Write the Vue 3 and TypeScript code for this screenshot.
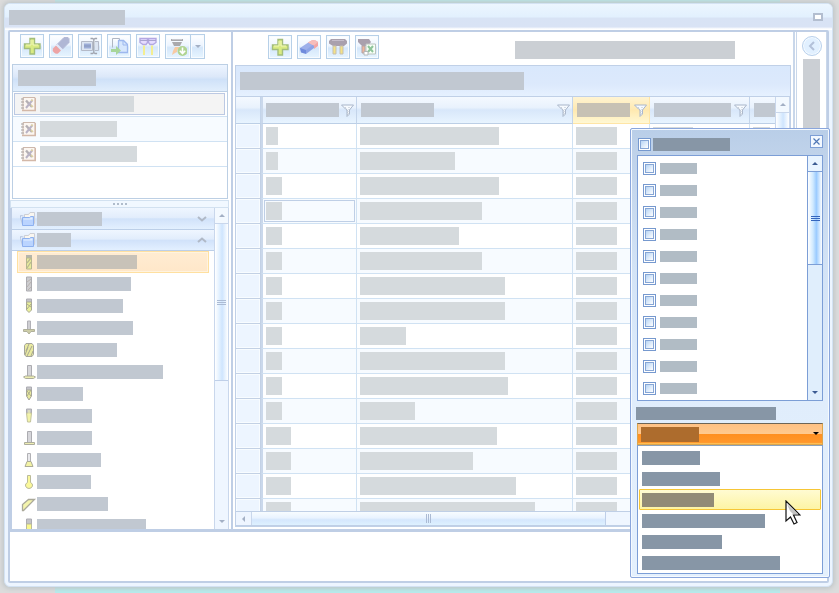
<script setup lang="ts">
import { ref } from 'vue'

interface Tool { name: string; art: string }

const cross = '<path d="M7 1.500h4.500V7H17v4.500h-5.500V17H7v-5.500H1.500V7H7z" fill="#d9eb83" stroke="#a3bd7b" stroke-width="1.4"/><path d="M8 3v5H3M10 3v5h5" fill="none" stroke="#f1f8b8"/>'

const leftTools: Tool[] = [
  { name: 'Add', art: cross },
  { name: 'Clear', art: '<path d="M12 .5h4l1 1v4l-7 7-5-5z" fill="#b0b7d5" stroke="#b4bad6"/><path d="M4 8.500l5 5-3 3q-2 1-4-1-2-2-1-4z" fill="#eda4a5"/><path d="M5 7.500l5.500 5.500" stroke="#e4eafb" stroke-width="1.5"/>' },
  { name: 'Rename', art: '<path d="M.5 4.500h11v9H.5zM14 4.500h3.500v9H14" fill="#dce5f2" stroke="#b4bac8"/><path d="M3 6.500h7v5H3z" fill="#9cacd7"/><path d="M3 9h7" stroke="#8797ba"/><path d="M9.500 1.500h2l1.300 1 1.300-1h2M12.800 2v14M9.500 16.500h2l1.300-1 1.300 1h2" fill="none" stroke="#a0a4ae" stroke-width="1.3"/>' },
  { name: 'Copy to', art: '<path d="M2.500 1.500h7v4M2.500 1.500v9" fill="#fff" stroke="#afb6c3"/><path d="M8.500 3.500h5l4 4v8h-9z" fill="#d7e7fd" stroke="#9db8ee" stroke-width="1.3"/><path d="M13 4v4h4" fill="none" stroke="#9db8ee"/><path d="M1 12h5V9l5 4.500L6 18v-3H1z" fill="#a8d69b"/>' },
  { name: 'Tools', art: '<path d="M1 1.500h7.500v4L7 7.500H4L1 5.500zM9.500 1.500H17v4l-3 2h-3l-1.500-2z" fill="#e5dcff" stroke="#b3a7e2" stroke-width="1.4"/><path d="M1 3.500h16" stroke="#a9a3d0"/><path d="M5 8.500V18M13 8.500V18" stroke="#f4ee91" stroke-width="2"/>' }
]

const addToolArt = '<path d="M2 1h12v2H2zM3 4h10l-2 4H5z" fill="#a9a9ad"/><path d="M3 1.500h10" stroke="#c7c7cc"/><path d="M6 9h5l-3 3v2l-2 1-3 2 1-4z" fill="#f8c9a2"/><circle cx="13.500" cy="13" r="5" fill="#b0d492"/><path d="M13.500 9.500v6M10.800 12.800l2.700 2.700 2.700-2.700" fill="none" stroke="#fff" stroke-width="1.6"/>'

const gridTools: Tool[] = [
  { name: 'Add row', art: cross },
  { name: 'Delete row', art: '<path d="M0 10l9-6 5 4-8 7-5-2z" fill="#9dafea"/><path d="M0 10l6 2v4l-5-1.500z" fill="#6f8bdc"/><path d="M6 12l8-6v4l-8 6z" fill="#8da4e6"/><path d="M8 4.500L12.500 2q3.500 0 5.500 2v4l-4 3V7.500z" fill="#f2a5a5"/><path d="M8 4.500L12.500 2q3.500 0 5.500 2l-4 3.500z" fill="#f6bdbb"/>' },
  { name: 'Mount tool', art: '<path d="M2 1h14l2 2v2.500L15 8H4L0 5.500V3z" fill="#a9a0ad"/><path d="M3 2.500h12" stroke="#c5bdca"/><path d="M4 8h3v8H4zM11 8h3v8h-3z" fill="#f5e284" stroke="#c5bfb0"/>' },
  { name: 'Export to sheet', art: '<path d="M0 1h11l2 3-3 4H4L0 4z" fill="#a9a0ad"/><path d="M4 8h3v7H4z" fill="#f0b69b" stroke="#b3a2a5"/><path d="M8 6h9.500v10H8z" fill="#f8fff7" stroke="#bbc3bf"/><path d="M10 8l5 6M15 8l-5 6" stroke="#8fc59a" stroke-width="2"/><path d="M6 13.500h4V17H6z" fill="#fff" stroke="#b3b8b8"/>' }
]

const folderArt = '<path d="M.5 4.500l3 .5M.5 4.500v2l2 7" fill="none" stroke="#b9c6df"/><path d="M4.500 5V3.500h4l1.500-2h4.500v11h-10z" fill="#f9f6f0" stroke="#cdcfd6"/><path d="M2.500 6.500h7l1-1h3v9h-11z" fill="#bad4ff" stroke="#8eb1ef"/><path d="M3.500 7.500h6.500l1-1h1.500v2h-9z" fill="#e3efff"/>'
const bookArt = '<path d="M3 1.500h12v13H3z" fill="#fcf6f1" stroke="#cdb8ac"/><path d="M2 14.500h13.500V2" fill="none" stroke="#d3b8a8" stroke-width="1.5"/><path d="M1 3h3M1 6h3M1 9h3M1 12h3" stroke="#aaa29f"/><path d="M6 4.500l6 6.500" stroke="#b4b0b4" stroke-width="2.4"/><path d="M12.500 4l-6.500 8" stroke="#b9b3c5" stroke-width="2"/><path d="M11 9l2 2M11.500 5l1-1.500" stroke="#ddd3a0" stroke-width="1.5"/>'

const projects = [94, 77, 97]

const shank = '<path d="M5.500 1h5v5h-5z" fill="#c5c5c8" stroke="#acacb3"/>'
const cutters = [
  { w: 100, art: '<path d="M5 1h6v3H5z" fill="#b5b5ac"/><path d="M5.500 4h5v11h-5z" fill="#e8eb9b" stroke="#b6b68f"/><path d="M6 9l4-5M6 14l4-6" stroke="#bbb993" stroke-width="1.3"/>' },
  { w: 94, art: '<path d="M5.500 1h5v14h-5z" fill="#cdcdd0" stroke="#acacb1"/><path d="M6 6l4-3M6 11l4-5M7 14l3-3" stroke="#b9b3b0"/>' },
  { w: 86, art: shank + '<path d="M5.500 4h5v8L8 14.500 5.500 12z" fill="#eaf09b" stroke="#a9a995"/><path d="M6 6l4 3M10 6l-4 5" stroke="#adad8c"/>' },
  { w: 96, art: '<path d="M6.500 1h3v9h-3z" fill="#cfcfd3" stroke="#b1b1b7"/><path d="M2.500 9.500h11v2H10L8 14l-2-2.500H2.500z" fill="#cdcda6" stroke="#b0b09b"/>' },
  { w: 80, art: '<path d="M5 1.500h6l1.500 2v9l-1.500 2H5l-1.500-2v-9z" fill="#e9eaa0" stroke="#a5a59b"/><path d="M5 9l3-7M6 14l5-10M10 14l2-5M4 13l3-8" stroke="#a7a792"/>' },
  { w: 126, art: '<path d="M6.500 1.500h4v11h-4z" fill="#d6d6da" stroke="#acacb1"/><path d="M2.500 13l2-1h8l2 1-2 1.500h-8z" fill="#ecedb0" stroke="#adad9c"/>' },
  { w: 46, art: shank + '<path d="M5.500 4h5v6L8 14 5.500 10z" fill="#e9ea9d" stroke="#a5a59b"/><path d="M6 10l4-6M6 5l4 5" stroke="#acad8c"/>' },
  { w: 55, art: shank + '<path d="M5.500 5h5L9.500 14h-3z" fill="#f2f3a8" stroke="#c3c39c"/><path d="M8 2v5" stroke="#f5f5b4"/>' },
  { w: 55, art: '<path d="M6.500 1.500h4v11h-4z" fill="#d6d6da" stroke="#acacb1"/><path d="M3.500 12.500h10v2h-10z" fill="#eeeeb3" stroke="#adad9c"/>' },
  { w: 64, art: '<path d="M6.500 1.500h3v9h-3z" fill="#e9e9ec" stroke="#b1b1b5"/><path d="M6 9.500h4l2 5H4z" fill="#f3f3a5" stroke="#acac96"/>' },
  { w: 54, art: '<path d="M6.500 1.500h3v7q2.500 1 2 3.500-1 2.500-3.500 2.500T4.500 12Q4 9.500 6.500 8.500z" fill="#faf89b" stroke="#bbbb9a"/>' },
  { w: 71, art: '<path d="M7.500 3.500h6l-8 8-3 3H1.500v-6z" fill="#f4f4ac" stroke="#aaa99a" stroke-width="1.3"/>' },
  { w: 109, art: shank + '<path d="M5.500 6h5v9h-5z" fill="#faf88e" stroke="#bbbb9a"/>' }
]

const columns = [
  { key: 'id', head: 73 },
  { key: 'name', head: 73 },
  { key: 'kind', head: 53 },
  { key: 'maker', head: 77 },
  { key: 'extra', head: 30 }
]

const nameWidths = [139, 95, 139, 122, 99, 122, 145, 145, 46, 145, 148, 55, 137, 113, 156, 175]
const rows = nameWidths.map((name, i) => ({
  cells: [i < 2 ? 12 : i < 12 ? 16 : 25, name, 41, 40, 17]
}))

const filters = ref(Array.from({ length: 11 }, () => false))
const allChecked = ref(false)
const options = [58, 78, 72, 123, 80, 138]
const chosen = ref(2)
const activeProject = ref(0)
const activeCutter = ref(0)
</script>

<template>
  <div class="desk">
    <div class="window">
      <header class="titlebar">
        <span class="bar title-bar"></span>
        <button class="restore" aria-label="Restore"></button>
      </header>

      <div class="frame">
        <main class="main">
          <aside class="left">
            <div class="toolbar">
              <button v-for="t in leftTools" :key="t.name" class="tool" :aria-label="t.name">
                <svg viewBox="0 0 18 18" v-html="t.art"></svg>
              </button>
              <div class="split">
                <button class="tool" aria-label="Add tool"><svg viewBox="0 0 18 18" v-html="addToolArt"></svg></button>
                <button class="tool more" aria-label="More"><i class="tri down"></i></button>
              </div>
            </div>

            <section class="projects">
              <div class="projects-head"><span class="bar"></span></div>
              <ul>
                <li v-for="(w, i) in projects" :key="i">
                  <button :class="['project', { active: i === activeProject }]" :aria-label="`Project ${i + 1}`" @click="activeProject = i">
                    <svg viewBox="0 0 16 16" v-html="bookArt"></svg>
                    <span class="bar" :style="{ width: w + 'px' }"></span>
                  </button>
                </li>
              </ul>
            </section>

            <div class="splitter"><i></i><i></i><i></i><i></i></div>

            <section class="tree">
              <div class="tree-body">
                <button class="group" aria-label="Group 1">
                  <svg viewBox="0 0 16 16" v-html="folderArt"></svg>
                  <span class="bar closed"></span>
                  <svg class="chev" viewBox="0 0 10 6"><path d="M1 1l4 3.500L9 1" /></svg>
                </button>
                <button class="group expanded" aria-label="Group 2">
                  <svg viewBox="0 0 16 16" v-html="folderArt"></svg>
                  <span class="bar open"></span>
                  <svg class="chev" viewBox="0 0 10 6"><path d="M1 5l4-3.500L9 5" /></svg>
                </button>
                <ul>
                  <li v-for="(c, i) in cutters" :key="i">
                    <button :class="['cutter', { active: i === activeCutter }]" :aria-label="`Cutter ${i + 1}`" @click="activeCutter = i">
                      <svg viewBox="0 0 16 16" v-html="c.art"></svg>
                      <span class="bar" :style="{ width: c.w + 'px' }"></span>
                    </button>
                  </li>
                </ul>
              </div>
              <div class="vscroll">
                <button class="up" aria-label="Scroll up"><i class="tri top"></i></button>
                <div class="thumb"><span class="grip"></span></div>
                <button class="dn" aria-label="Scroll down"><i class="tri down"></i></button>
              </div>
            </section>
          </aside>

          <section class="center">
            <div class="toolbar grid-tools">
              <button v-for="t in gridTools" :key="t.name" class="tool" :aria-label="t.name">
                <svg viewBox="0 0 18 18" v-html="t.art"></svg>
              </button>
              <span class="bar status"></span>
            </div>

            <div class="grid">
              <div class="caption"><span class="bar"></span></div>
              <div class="grid-row">
                <div class="grid-view">
                  <table>
                    <colgroup>
                      <col class="c-head"><col class="c-id"><col class="c-name"><col class="c-kind"><col class="c-maker"><col class="c-extra">
                    </colgroup>
                    <thead>
                      <tr>
                        <th class="rowhead"></th>
                        <th v-for="c in columns" :key="c.key" :class="c.key">
                          <div class="th">
                            <span class="bar" :style="{ width: c.head + 'px' }"></span>
                            <button v-if="c.key !== 'extra'" class="funnel" aria-label="Filter">
                              <svg viewBox="0 0 13 13"><path class="cup" d="M.5 1h12L8.500 6v4L6 12.500V6L4.500 5z" /><path class="dots" d="M4 3l2.500 3.500V12M8 3v7" /></svg>
                            </button>
                          </div>
                        </th>
                      </tr>
                    </thead>
                    <tbody>
                      <tr v-for="(r, i) in rows" :key="i">
                        <td class="rowhead"></td>
                        <td v-for="(w, j) in r.cells" :key="j" :class="[columns[j].key, { focus: i === 3 && j === 0 }]">
                          <span class="bar" :style="{ width: w + 'px' }"></span>
                        </td>
                      </tr>
                    </tbody>
                  </table>
                </div>
                <div class="vscroll">
                  <button class="up" aria-label="Scroll up"><i class="tri top"></i></button>
                  <div class="thumb"><span class="grip"></span></div>
                  <button class="dn" aria-label="Scroll down"><i class="tri down"></i></button>
                </div>
              </div>
              <div class="hscroll">
                <button aria-label="Scroll left"><i class="tri left-tri"></i></button>
                <div class="hthumb"><span class="vgrip"></span></div>
                <div class="rest"></div>
              </div>
            </div>
          </section>

          <aside class="right">
            <button class="expand" aria-label="Expand panel"><svg viewBox="0 0 10 12"><path d="M7 2L3 6l4 4" /></svg></button>
            <span class="bar"></span>
          </aside>
        </main>
        <footer class="foot"></footer>
      </div>

      <div class="popup">
        <div class="popup-head">
          <label><input v-model="allChecked" type="checkbox" aria-label="Select all"><span class="bar"></span></label>
          <button class="close" aria-label="Close"><svg viewBox="0 0 9 9"><path d="M1.500 1.500l6 6M7.500 1.500l-6 6" /></svg></button>
        </div>
        <div class="checks">
          <ul>
            <li v-for="(_, i) in filters" :key="i">
              <label><input v-model="filters[i]" type="checkbox" :aria-label="`Value ${i + 1}`"><span class="bar"></span></label>
            </li>
          </ul>
          <div class="vscroll strong">
            <button class="up" aria-label="Scroll up"><i class="tri top"></i></button>
            <div class="thumb"><span class="grip"></span></div>
            <button class="dn" aria-label="Scroll down"><i class="tri down"></i></button>
          </div>
        </div>
        <label class="field-label" for="condition"><span class="bar"></span></label>
        <div class="combo">
          <select id="condition" v-model="chosen" aria-label="Condition">
            <option v-for="(_, i) in options" :key="i" :value="i"></option>
          </select>
          <span class="bar"></span>
          <i class="tri down"></i>
        </div>
        <ul class="menu" role="listbox" aria-label="Conditions">
          <li v-for="(w, i) in options" :key="i" role="option" :aria-selected="i === chosen" :class="{ hot: i === chosen }" @click="chosen = i">
            <span class="bar" :style="{ width: w + 'px' }"></span>
          </li>
        </ul>
        <svg class="cursor" viewBox="0 0 16 25"><path class="arrow-light" d="M1 1v20l4.500-4L9 24l3-1.500L8.500 15H15z" /><path class="arrow-shade" d="M2 4v0l11 10H8l-3-3z" /></svg>
      </div>
    </div>
  </div>
</template>

<style>
body { margin: 0; }
</style>

<style scoped>
* { box-sizing: border-box; }
ul { list-style: none; margin: 0; padding: 0; }
button { padding: 0; margin: 0; border: 0; background: none; font: inherit; display: flex; align-items: center; }
svg { display: block; flex: none; }
.bar { display: block; flex: none; height: 14px; background: #c1c8d1; }

.desk {
  display: flex;
  height: 100vh;
  min-height: 400px;
  padding: 3px 6px 6px 4px;
  overflow: hidden;
  font-family: "Liberation Sans", Arial, sans-serif;
  background: linear-gradient(90deg, #dcdcdc 55px, #b5ecec 55px, #b5ecec calc(100% - 59px), #dcdcdc calc(100% - 59px));
}
.window {
  position: relative;
  flex: 1;
  min-width: 0;
  display: flex;
  flex-direction: column;
  padding: 0 3px 3px;
  border: 1px solid #d3e2f3;
  border-radius: 6px;
  background: #edf5ff;
  box-shadow: 0 0 4px 2px #c2c8ca;
}
.titlebar {
  flex: none;
  height: 26px;
  margin: 0 -3px;
  padding: 0 9px 0 4px;
  display: flex;
  align-items: center;
  justify-content: space-between;
  border-radius: 5px 5px 0 0;
  background: linear-gradient(#ecf6ff, #e2f0fe 50%, #d8e3f5 54%, #d9e3f5 88%, #fff 96%);
}
.title-bar { width: 116px; height: 15px; margin-top: 1px; }
.restore { width: 10px; height: 8px; border: 2px solid #b3bed0; background: #fff; }

.frame { flex: 1; min-height: 0; display: flex; flex-direction: column; border: 2px solid #bfcee5; border-radius: 2px; background: #fff; }
.main { flex: 1; min-height: 0; display: flex; border-bottom: 3px solid #bfcee5; }
.foot { flex: none; height: 49px; background: #fff; }

.left { flex: none; width: 221px; display: flex; flex-direction: column; padding-right: 2px; }
.toolbar { flex: none; display: flex; align-items: flex-start; gap: 5px; height: 32px; padding: 2px 0 0 10px; }
.tool {
  width: 24px; height: 24px; justify-content: center; border: 1px solid #b7d0e8;
  background: linear-gradient(#fff, #edf5ff 45%, #d5e7fa 55%, #e7f5ff);
  box-shadow: inset 0 0 0 1px #f7fbff;
}
.tool svg { width: 18px; height: 18px; }
.split { display: flex; }
.split .tool { width: 26px; height: 25px; }
.split .more { width: 14px; border-left: 0; }

.tri { display: block; width: 0; height: 0; border: 3px solid transparent; }
.tri.down { border-top-color: #a3b0c5; border-bottom: 0; }
.tri.top { border-bottom-color: #a3b0c5; border-top: 0; }
.tri.left-tri { border-right-color: #a3b0c5; border-left: 0; }

.projects { flex: none; height: 135px; margin: 0 1px 0 2px; border: 1px solid #bccfe4; }
.projects-head {
  height: 27px; display: flex; align-items: center; padding-left: 5px; border-bottom: 1px solid #bccfe4;
  background: linear-gradient(#eef5ff, #dce8f9 45%, #cfe1f8 55%, #e1eefc);
}
.projects-head .bar { width: 78px; height: 16px; }
.projects li { height: 25px; border-bottom: 1px solid #d0e2f3; }
.projects li:nth-child(2) { background: #f7fbff; }
.project { width: 100%; height: 24px; padding-left: 7px; gap: 4px; }
.project.active { width: calc(100% - 3px); height: 22px; margin: 1px; padding-left: 5px; border: 1px solid #bcc9e3; background: #f4f4f4; }
.project svg { width: 16px; height: 16px; }
.project .bar { height: 16px; background: #d5dadd; }

.projects li { display: flex; align-items: flex-start; }
.splitter { flex: none; height: 8px; display: flex; align-items: center; justify-content: center; gap: 2px; margin-top: 1px; border: 1px solid #d2e1f0; background: #f1f8ff; }
.splitter i { width: 2px; height: 2px; background: #b0bccb; }

.tree { flex: 1; min-height: 0; display: flex; border-left: 2px solid #bfcee5; }
.tree-body { flex: 1; min-width: 0; overflow: hidden; }
.group {
  width: 100%; height: 22px; padding: 0 7px 0 8px; gap: 1px; border-bottom: 1px solid #bccfe8;
  background: linear-gradient(#eff6ff, #e2edfc 45%, #d1e2fa 52%, #e3f0ff);
}
.group.expanded { height: 21px; }
.group svg { width: 16px; height: 16px; }
.group .bar.closed { width: 65px; }
.group .bar.open { width: 34px; }
.group .chev { width: 10px; height: 6px; margin-left: auto; fill: none; stroke: #b0b9c7; stroke-width: 2; }
.cutter { width: calc(100% - 10px); height: 22px; margin-left: 5px; padding-left: 3px; border: 1px solid transparent; }
.cutter.active { border-color: #ffe0a0; background: linear-gradient(#ffecd2, #ffe7c9); box-shadow: inset 0 0 0 1px #fff3df; }
.cutter svg { width: 16px; height: 16px; }
.cutter.active .bar { background: #c8c2b8; }

.vscroll { flex: none; width: 15px; display: flex; flex-direction: column; border: 1px solid #c9d7ec; border-width: 0 1px; background: #eff6ff; }
.vscroll button { width: 100%; height: 16px; flex: none; justify-content: center; }
.vscroll .up { background: #f3f9ff; border-bottom: 1px solid #c9d7ec; }
.vscroll .dn { margin-top: auto; }
.vscroll .thumb {
  height: 49%; display: flex; align-items: center; justify-content: center; border-bottom: 1px solid #bfcfe8;
  background: linear-gradient(90deg, #fff, #e5f2ff 30%, #cfe5fe 55%, #fff);
}
.grip { width: 9px; height: 5px; border: 1px solid #acbbd4; border-width: 1px 0; background: linear-gradient(transparent 1px, #acbbd4 1px, #acbbd4 2px, transparent 2px); }

.center { flex: 1; min-width: 0; display: flex; flex-direction: column; padding: 0 2px 2px 2px; border-left: 2px solid #bfcee5; border-right: 2px solid #c9d7ea; }
.grid-tools { height: 33px; padding: 3px 56px 0 33px; }
.status { width: 220px; height: 18px; margin: 6px 0 0 auto; background: #cbcfd4; }
.grid { flex: 1; min-height: 0; display: flex; flex-direction: column; border: 1px solid #c0d0e7; }
.caption { flex: none; height: 30px; display: flex; align-items: center; padding-left: 4px; background: linear-gradient(#d9e8fc, #dce9fc 60%, #e6f1ff); }
.caption .bar { width: 284px; height: 18px; }
.grid-row { flex: 1; min-height: 0; display: flex; border-top: 1px solid #c0d0e7; }
.grid-view { flex: 1; min-width: 0; overflow: hidden; }
.grid-row .vscroll .thumb { height: 60%; }

table { table-layout: fixed; width: 553px; border-collapse: separate; border-spacing: 0; }
.c-head { width: 25px; }
.c-id { width: 96px; }
.c-name { width: 216px; }
.c-kind { width: 77px; }
.c-maker { width: 100px; }
.c-extra { width: 39px; }
th { height: 27px; padding: 0 2px 0 4px; border-right: 1px solid #c3d4ea; border-bottom: 1px solid #bccfe6; background: linear-gradient(#f4f9ff, #e9f2fd 40%, #d8e7fa 50%, #e8f4ff); }
td { height: 25px; padding: 0 3px; border-right: 1px solid #d0e2f3; border-bottom: 1px solid #d0e2f3; background: #fff; }
tbody tr:nth-child(even) td { background: #f7fbff; }
td .bar { height: 18px; background: #d5dadd; }
.th { display: flex; align-items: center; justify-content: space-between; }
.th .bar { height: 14px; }
th.kind { background: linear-gradient(#fff4d3, #ffe9b0 50%, #fff8d4); border-color: #ffe5a6; }
th.kind .bar { background: #c7c1b4; }
th.id, td.id { border-left: 2px solid #cad8eb; }
th.id { padding-left: 3px; }
th.rowhead { padding: 0; }
tbody tr td.rowhead { padding: 0; background: #edf5ff; border-color: #c3d1e5; box-shadow: inset 0 0 0 1px #f8fcff; }
td.focus { box-shadow: inset 0 0 0 1px #f7fbff, inset 0 0 0 2px #bfcfe6; }
.funnel svg { width: 13px; height: 13px; }
.cup { fill: #f7fbff; stroke: #a9b6ca; }
.dots { fill: none; stroke: #b8c0ce; stroke-dasharray: 1 1; }

.hscroll { flex: none; height: 15px; display: flex; border-top: 1px solid #bfcfe6; border-bottom: 1px solid #bfcfe6; background: #eff6ff; }
.hscroll button { width: 16px; justify-content: center; border-right: 1px solid #c9d7ec; background: #eef5ff; }
.hthumb { width: 354px; display: flex; align-items: center; justify-content: center; border-right: 1px solid #bfcfe8; background: linear-gradient(#f8fcff, #e9f3ff 45%, #d5e7fd 60%, #def1ff); }
.vgrip { width: 5px; height: 9px; border: 1px solid #acbbd4; border-width: 0 1px; background: linear-gradient(90deg, transparent 1px, #acbbd4 1px, #acbbd4 2px, transparent 2px); }

.right { flex: none; width: 31px; display: flex; flex-direction: column; align-items: center; margin-left: 1px; padding-top: 4px; border-left: 1px solid #c9d7ea; border-right: 1px solid #c9d7ea; }
.expand { width: 20px; height: 20px; justify-content: center; border: 1px solid #bad1ec; border-radius: 50%; background: #e1f0ff; box-shadow: inset 0 0 0 1px #f6fbff; }
.expand svg { width: 10px; height: 12px; fill: none; stroke: #b3c1d9; stroke-width: 2; }
.right .bar { width: 17px; height: 120px; margin-top: 3px; background: #cbcfd4; }

.popup {
  position: absolute; top: 124px; right: 2px; width: 200px; padding: 5px 6px 3px;
  border: 1px solid #8aa6dc; border-radius: 2px; box-shadow: inset 0 0 0 1px #f5faff;
  background: linear-gradient(#b9cee8, #bfd2ea 24px, #d3e3f6 140px, #e0edfc 270px, #e4f0fd);
}
.popup-head { display: flex; align-items: flex-start; justify-content: space-between; height: 21px; padding-left: 1px; }
.popup-head label { display: flex; gap: 2px; padding-top: 4px; }
.popup-head .bar { width: 77px; height: 13px; background: #8796a6; }
.close { width: 13px; height: 13px; justify-content: center; margin-top: 1px; border: 1px solid #7c9ed6; background: #f2f8ff; }
.close svg { width: 9px; height: 9px; stroke: #4e76b5; stroke-width: 1.2; fill: none; }
input {
  appearance: none; flex: none; width: 13px; height: 13px; margin: 0; border: 1px solid #7699cf;
  background: linear-gradient(135deg, #b8d5f5, #fff) content-box, #fff; padding: 2px; position: relative;
}
input::after { content: ""; position: absolute; inset: 1px; border: 1px solid #86a6d6; }
input:checked::after { background: #4e76b5; }
.checks { display: flex; height: 246px; border: 1px solid #7c9ed6; background: #fff; }
.checks ul { flex: 1; padding-top: 1px; overflow: hidden; }
.checks label { display: flex; align-items: center; gap: 4px; height: 22px; padding-left: 5px; }
.checks .bar { width: 37px; height: 11px; margin-top: 1px; background: #b1bcc5; }
.vscroll.strong { border-width: 0 0 0 1px; border-color: #7c9ed6; background: #e0eefc; }
.strong .up { background: #e9f4ff; border-color: #7c9ed6; }
.strong .thumb { height: 93px; border-color: #7c9ed6; background: linear-gradient(90deg, #fff, #d1eaff 35%, #9bcbff 60%, #fff); }
.strong .tri.top { border-bottom-color: #3c5b92; }
.strong .tri.down { border-top-color: #3c5b92; }
.strong .grip { border-color: #3465bd; background: linear-gradient(transparent 1px, #3465bd 1px, #3465bd 2px, transparent 2px); }
.field-label { display: block; margin-left: -1px; padding: 6px 0 3px; }
.field-label .bar { width: 140px; height: 13px; background: #8796a6; }
.combo { position: relative; height: 22px; }
.combo select { appearance: none; display: block; width: 100%; height: 22px; border: 1px solid #dba54c; border-top-color: #6d6557; border-radius: 0; background: linear-gradient(#ffc184, #ffc98e 48%, #ff8f20 50%, #ff972b 92%, #ffce65); }
.combo .bar { position: absolute; left: 4px; top: 4px; width: 58px; height: 15px; background: #ad6c2d; pointer-events: none; }
.combo .tri { position: absolute; right: 4px; top: 9px; border-top-color: #000; pointer-events: none; }
.menu { padding: 1px 1px 0; border: 1px solid #7c9ed6; border-top: 1px solid #8ca1b9; background: #fff; }
.menu li { height: 21px; display: flex; align-items: center; padding-left: 2px; border: 1px solid transparent; }
.menu li.hot { border-color: #f6c636; border-radius: 1px; background: linear-gradient(#fffbd2, #fdf4a4); }
.menu .bar { background: #8796a6; }
.menu .hot .bar { background: #928b76; }
.cursor { position: absolute; left: 154px; top: 371px; width: 16px; height: 25px; pointer-events: none; }
.arrow-light { fill: #fff; stroke: #111; stroke-width: 1.2; }
.arrow-shade { fill: #c4c4c4; }
</style>
